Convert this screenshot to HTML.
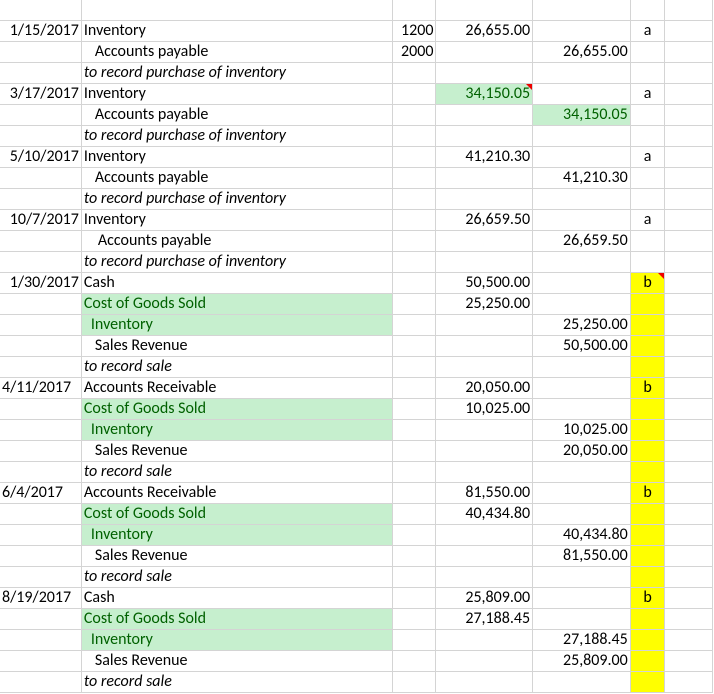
<!DOCTYPE html>
<html><head><meta charset="utf-8"><style>
body{margin:0;width:714px;height:694px;overflow:hidden;background:#fff;font-family:Carlito,"Liberation Sans",sans-serif;font-size:16px;color:#000}
table{border-collapse:collapse;table-layout:fixed;position:absolute;left:-1px;top:-1px;font-size:16px}
td{border:1px solid #d4d4d4;height:20px;padding:0 2px;white-space:nowrap;overflow:visible;line-height:20px;position:relative;font-size:16px}
.r{text-align:right}.c{text-align:center}
.i{font-style:italic}
.g{background:#c6efce;color:#006100}
.y{background:#ffff00}
.p1{padding-left:13px}.p2{padding-left:9px}.p3{padding-left:16px}
.tri:after{content:"";position:absolute;right:0;top:0;border-top:6px solid #e00;border-left:6px solid transparent}
</style></head><body>
<table>
<colgroup><col style="width:82px"><col style="width:312px"><col style="width:44px"><col style="width:97px"><col style="width:98px"><col style="width:35px"><col style="width:48px"></colgroup>
<tr><td></td><td></td><td></td><td></td><td></td><td></td><td></td></tr>
<tr><td class="r">1/15/2017</td><td>Inventory</td><td class="r">1200</td><td class="r">26,655.00</td><td></td><td class="c">a</td><td></td></tr>
<tr><td></td><td class="p1">Accounts payable</td><td class="r">2000</td><td></td><td class="r">26,655.00</td><td></td><td></td></tr>
<tr><td></td><td class="i">to record purchase of inventory</td><td></td><td></td><td></td><td></td><td></td></tr>
<tr><td class="r">3/17/2017</td><td>Inventory</td><td></td><td class="r g tri">34,150.05</td><td></td><td class="c">a</td><td></td></tr>
<tr><td></td><td class="p1">Accounts payable</td><td></td><td></td><td class="r g">34,150.05</td><td></td><td></td></tr>
<tr><td></td><td class="i">to record purchase of inventory</td><td></td><td></td><td></td><td></td><td></td></tr>
<tr><td class="r">5/10/2017</td><td>Inventory</td><td></td><td class="r">41,210.30</td><td></td><td class="c">a</td><td></td></tr>
<tr><td></td><td class="p1">Accounts payable</td><td></td><td></td><td class="r">41,210.30</td><td></td><td></td></tr>
<tr><td></td><td class="i">to record purchase of inventory</td><td></td><td></td><td></td><td></td><td></td></tr>
<tr><td class="r">10/7/2017</td><td>Inventory</td><td></td><td class="r">26,659.50</td><td></td><td class="c">a</td><td></td></tr>
<tr><td></td><td class="p3">Accounts payable</td><td></td><td></td><td class="r">26,659.50</td><td></td><td></td></tr>
<tr><td></td><td class="i">to record purchase of inventory</td><td></td><td></td><td></td><td></td><td></td></tr>
<tr><td class="r">1/30/2017</td><td>Cash</td><td></td><td class="r">50,500.00</td><td></td><td class="c y tri">b</td><td></td></tr>
<tr><td></td><td class="g">Cost of Goods Sold</td><td></td><td class="r">25,250.00</td><td></td><td class="y"></td><td></td></tr>
<tr><td></td><td class="g p2">Inventory</td><td></td><td></td><td class="r">25,250.00</td><td class="y"></td><td></td></tr>
<tr><td></td><td class="p1">Sales Revenue</td><td></td><td></td><td class="r">50,500.00</td><td class="y"></td><td></td></tr>
<tr><td></td><td class="i">to record sale</td><td></td><td></td><td></td><td class="y"></td><td></td></tr>
<tr><td>4/11/2017</td><td>Accounts Receivable</td><td></td><td class="r">20,050.00</td><td></td><td class="c y">b</td><td></td></tr>
<tr><td></td><td class="g">Cost of Goods Sold</td><td></td><td class="r">10,025.00</td><td></td><td class="y"></td><td></td></tr>
<tr><td></td><td class="g p2">Inventory</td><td></td><td></td><td class="r">10,025.00</td><td class="y"></td><td></td></tr>
<tr><td></td><td class="p1">Sales Revenue</td><td></td><td></td><td class="r">20,050.00</td><td class="y"></td><td></td></tr>
<tr><td></td><td class="i">to record sale</td><td></td><td></td><td></td><td class="y"></td><td></td></tr>
<tr><td>6/4/2017</td><td>Accounts Receivable</td><td></td><td class="r">81,550.00</td><td></td><td class="c y">b</td><td></td></tr>
<tr><td></td><td class="g">Cost of Goods Sold</td><td></td><td class="r">40,434.80</td><td></td><td class="y"></td><td></td></tr>
<tr><td></td><td class="g p2">Inventory</td><td></td><td></td><td class="r">40,434.80</td><td class="y"></td><td></td></tr>
<tr><td></td><td class="p1">Sales Revenue</td><td></td><td></td><td class="r">81,550.00</td><td class="y"></td><td></td></tr>
<tr><td></td><td class="i">to record sale</td><td></td><td></td><td></td><td class="y"></td><td></td></tr>
<tr><td>8/19/2017</td><td>Cash</td><td></td><td class="r">25,809.00</td><td></td><td class="c y">b</td><td></td></tr>
<tr><td></td><td class="g">Cost of Goods Sold</td><td></td><td class="r">27,188.45</td><td></td><td class="y"></td><td></td></tr>
<tr><td></td><td class="g p2">Inventory</td><td></td><td></td><td class="r">27,188.45</td><td class="y"></td><td></td></tr>
<tr><td></td><td class="p1">Sales Revenue</td><td></td><td></td><td class="r">25,809.00</td><td class="y"></td><td></td></tr>
<tr><td></td><td class="i">to record sale</td><td></td><td></td><td></td><td class="y"></td><td></td></tr>
</table>
</body></html>
